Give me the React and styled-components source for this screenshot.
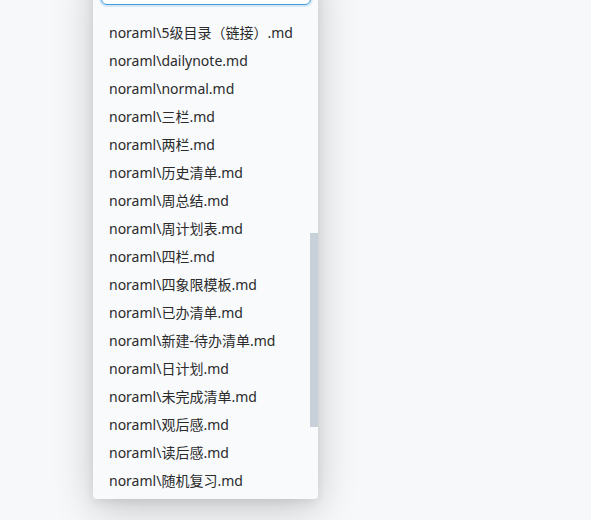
import React from "react";
import styled, { createGlobalStyle } from "styled-components";

const Global = createGlobalStyle`
  html, body { margin: 0; padding: 0; background: #f7f8fa; }
  body { font-family: "Noto Sans", "Noto Sans CJK SC", sans-serif; }
`;

const Page = styled.div`
  width: 591px;
  height: 520px;
  overflow: hidden;
  padding-left: 93px;
  box-sizing: border-box;
`;

const Panel = styled.div`
  position: relative;
  width: 225px;
  margin-top: -35px;
  background: #f8fafc;
  border-radius: 4px;
  box-shadow: 0 10px 40px rgba(0, 0, 0, 0.2), 0 3px 10px rgba(0, 0, 0, 0.08);
  padding: 8px 0 4px 0;
  overflow: hidden;
`;

const SearchBox = styled.input`
  display: block;
  box-sizing: border-box;
  width: 210px;
  height: 32px;
  margin: 0 0 14px 8px;
  border: 1px solid #3f9bd8;
  border-radius: 6px;
  background: #fff;
  box-shadow: 0 0 0 2px #d6e8f8;
  outline: none;
`;

const List = styled.ul`
  list-style: none;
  margin: 0;
  padding: 0;
`;

const Item = styled.li`
  height: 28px;
  line-height: 28px;
  padding-left: 16px;
  font-size: 14px;
  color: #2b2b2b;
  white-space: nowrap;
`;

const Thumb = styled.div`
  position: absolute;
  right: 0;
  top: 268px;
  width: 8px;
  height: 194px;
  background: #c8d1d9;
`;

const items = [
  "noraml\\5级目录（链接）.md",
  "noraml\\dailynote.md",
  "noraml\\normal.md",
  "noraml\\三栏.md",
  "noraml\\两栏.md",
  "noraml\\历史清单.md",
  "noraml\\周总结.md",
  "noraml\\周计划表.md",
  "noraml\\四栏.md",
  "noraml\\四象限模板.md",
  "noraml\\已办清单.md",
  "noraml\\新建-待办清单.md",
  "noraml\\日计划.md",
  "noraml\\未完成清单.md",
  "noraml\\观后感.md",
  "noraml\\读后感.md",
  "noraml\\随机复习.md",
];

export default function App() {
  return (
    <>
      <Global />
      <Page>
        <Panel>
          <SearchBox />
          <List>
            {items.map((t) => (
              <Item key={t}>{t}</Item>
            ))}
          </List>
          <Thumb />
        </Panel>
      </Page>
    </>
  );
}
